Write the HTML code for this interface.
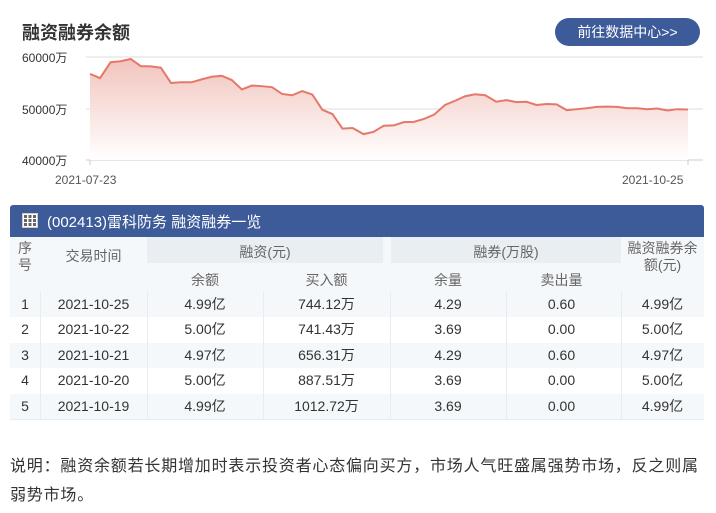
<!DOCTYPE html>
<html><head><meta charset="utf-8"><style>
body{margin:0;width:716px;height:513px;background:#fff;font-family:"Liberation Sans","Noto Sans CJK SC",sans-serif;color:#333;position:relative;overflow:hidden}
.a{position:absolute}
.c{position:absolute;text-align:center;font-size:14px}
</style></head><body>
<div class="a" style="left:22px;top:19px;font-size:18px;font-weight:bold;color:#333">融资融券余额</div>
<div class="a" style="left:555px;top:18px;width:145px;height:28px;border-radius:14px;background:#3d5a99;color:#fff;font-size:14px;line-height:28px;text-align:center">前往数据中心&gt;&gt;</div>
<div class="a" style="left:22px;top:49px;font-size:12px">60000万</div>
<div class="a" style="left:22px;top:101px;font-size:12px">50000万</div>
<div class="a" style="left:22px;top:152px;font-size:12px">40000万</div>
<div class="a" style="left:55px;top:173px;font-size:12px;color:#555">2021-07-23</div>
<div class="a" style="left:622px;top:173px;font-size:12px;color:#555">2021-10-25</div>
<svg class="a" style="left:0;top:0" width="716" height="200">
<defs><linearGradient id="g" x1="0" y1="0" x2="0" y2="1"><stop offset="0" stop-color="#f2c4bd"/><stop offset="1" stop-color="#fff"/></linearGradient></defs>
<line x1="86" y1="57" x2="703" y2="57" stroke="#ddd"/>
<line x1="86" y1="109" x2="703" y2="109" stroke="#ddd"/>
<line x1="86" y1="160" x2="703" y2="160" stroke="#ccc"/>
<line x1="90" y1="160" x2="90" y2="165" stroke="#ccc"/>
<line x1="688" y1="160" x2="688" y2="165" stroke="#ccc"/>
<g transform="matrix(0.4575 0 0 0.324 -0.6 1.3)">
<polygon fill="url(#g)" points="198,490 198,224 220,237 243,188 265,185 287,178 309,200 331,201 353,205 375,252 397,250 420,250 442,241 464,233 486,230 508,243 530,272 552,260 574,262 596,265 618,286 640,290 662,277 684,288 706,335 728,348 750,393 772,391 796,410 818,403 840,384 862,383 884,373 906,372 928,363 950,350 974,320 996,307 1018,293 1040,287 1062,290 1086,310 1108,305 1130,311 1152,310 1174,320 1196,317 1218,318 1240,336 1262,333 1284,330 1306,326 1328,325 1350,326 1372,330 1394,330 1416,333 1438,331 1460,337 1482,333 1505,334 1505,490"/>
<polyline fill="none" stroke="#e5786a" stroke-width="2" vector-effect="non-scaling-stroke" points="198,224 220,237 243,188 265,185 287,178 309,200 331,201 353,205 375,252 397,250 420,250 442,241 464,233 486,230 508,243 530,272 552,260 574,262 596,265 618,286 640,290 662,277 684,288 706,335 728,348 750,393 772,391 796,410 818,403 840,384 862,383 884,373 906,372 928,363 950,350 974,320 996,307 1018,293 1040,287 1062,290 1086,310 1108,305 1130,311 1152,310 1174,320 1196,317 1218,318 1240,336 1262,333 1284,330 1306,326 1328,325 1350,326 1372,330 1394,330 1416,333 1438,331 1460,337 1482,333 1505,334"/>
</g></svg>

<div class="a" style="left:10px;top:205px;width:694px;height:32px;background:#3d5a99;border-radius:3px 3px 0 0"></div>
<svg class="a" style="left:22px;top:213px" width="16" height="15"><rect x="0.5" y="0.5" width="15" height="14" fill="#fff" stroke="#ccc"/><g fill="#666"><rect x="2" y="2" width="3" height="3"/><rect x="6.5" y="2" width="3" height="3"/><rect x="11" y="2" width="3" height="3"/><rect x="2" y="6" width="3" height="3"/><rect x="6.5" y="6" width="3" height="3"/><rect x="11" y="6" width="3" height="3"/><rect x="2" y="10" width="3" height="3"/><rect x="6.5" y="10" width="3" height="3"/><rect x="11" y="10" width="3" height="3"/></g></svg>
<div class="a" style="left:47px;top:211px;color:#fff;font-size:15px">(002413)雷科防务 融资融券一览</div>

<div class="a" style="left:10px;top:237px;width:694px;height:55px;background:#f4f8fa"></div>
<div class="a" style="left:147px;top:237px;width:236px;height:26px;background:#e8eef2"></div>
<div class="a" style="left:391px;top:237px;width:230px;height:26px;background:#e8eef2"></div>
<div class="c" style="left:10px;top:240px;width:30px;line-height:17px;color:#666">序<br>号</div>
<div class="c" style="left:40px;top:246px;width:107px;color:#666">交易时间</div>
<div class="c" style="left:147px;top:242px;width:236px;color:#666">融资(元)</div>
<div class="c" style="left:391px;top:242px;width:230px;color:#666">融券(万股)</div>
<div class="c" style="left:621px;top:240px;width:83px;line-height:17px;color:#666">融资融券余<br>额(元)</div>
<div class="c" style="left:147px;top:270px;width:116px;color:#666">余额</div>
<div class="c" style="left:263px;top:270px;width:127px;color:#666">买入额</div>
<div class="c" style="left:390px;top:270px;width:116px;color:#666">余量</div>
<div class="c" style="left:506px;top:270px;width:111px;color:#666">卖出量</div>

<div class="a" style="left:10px;top:292px;width:694px;height:127px;border-bottom:1px solid #e6ecef">
<div style="height:25.4px;background:#f4f8fa"></div><div style="height:25.4px"></div><div style="height:25.4px;background:#f4f8fa"></div><div style="height:25.4px"></div><div style="height:25.4px;background:#f4f8fa"></div>
</div>
<div class="a" style="left:40px;top:292px;width:1px;height:127px;background:#e6ecef"></div>
<div class="a" style="left:147px;top:292px;width:1px;height:127px;background:#e6ecef"></div>
<div class="a" style="left:263px;top:292px;width:1px;height:127px;background:#e6ecef"></div>
<div class="a" style="left:390px;top:292px;width:1px;height:127px;background:#e6ecef"></div>
<div class="a" style="left:506px;top:292px;width:1px;height:127px;background:#e6ecef"></div>
<div class="a" style="left:621px;top:292px;width:1px;height:127px;background:#e6ecef"></div>

<div class="a" style="left:10px;top:292px;width:694px;font-size:14px;line-height:25.4px">
<div style="position:relative;height:25.4px"><span class="c" style="left:0;width:30px">1</span><span class="c" style="left:30px;width:107px">2021-10-25</span><span class="c" style="left:137px;width:116px">4.99亿</span><span class="c" style="left:253px;width:127px">744.12万</span><span class="c" style="left:380px;width:116px">4.29</span><span class="c" style="left:496px;width:111px">0.60</span><span class="c" style="left:611px;width:83px">4.99亿</span></div>
<div style="position:relative;height:25.4px"><span class="c" style="left:0;width:30px">2</span><span class="c" style="left:30px;width:107px">2021-10-22</span><span class="c" style="left:137px;width:116px">5.00亿</span><span class="c" style="left:253px;width:127px">741.43万</span><span class="c" style="left:380px;width:116px">3.69</span><span class="c" style="left:496px;width:111px">0.00</span><span class="c" style="left:611px;width:83px">5.00亿</span></div>
<div style="position:relative;height:25.4px"><span class="c" style="left:0;width:30px">3</span><span class="c" style="left:30px;width:107px">2021-10-21</span><span class="c" style="left:137px;width:116px">4.97亿</span><span class="c" style="left:253px;width:127px">656.31万</span><span class="c" style="left:380px;width:116px">4.29</span><span class="c" style="left:496px;width:111px">0.60</span><span class="c" style="left:611px;width:83px">4.97亿</span></div>
<div style="position:relative;height:25.4px"><span class="c" style="left:0;width:30px">4</span><span class="c" style="left:30px;width:107px">2021-10-20</span><span class="c" style="left:137px;width:116px">5.00亿</span><span class="c" style="left:253px;width:127px">887.51万</span><span class="c" style="left:380px;width:116px">3.69</span><span class="c" style="left:496px;width:111px">0.00</span><span class="c" style="left:611px;width:83px">5.00亿</span></div>
<div style="position:relative;height:25.4px"><span class="c" style="left:0;width:30px">5</span><span class="c" style="left:30px;width:107px">2021-10-19</span><span class="c" style="left:137px;width:116px">4.99亿</span><span class="c" style="left:253px;width:127px">1012.72万</span><span class="c" style="left:380px;width:116px">3.69</span><span class="c" style="left:496px;width:111px">0.00</span><span class="c" style="left:611px;width:83px">4.99亿</span></div>
</div>

<div class="a" style="left:10px;top:452px;width:702px;font-size:16px;letter-spacing:0.8px;line-height:29px;color:#333">说明：融资余额若长期增加时表示投资者心态偏向买方，市场人气旺盛属强势市场，反之则属弱势市场。</div>
</body></html>
